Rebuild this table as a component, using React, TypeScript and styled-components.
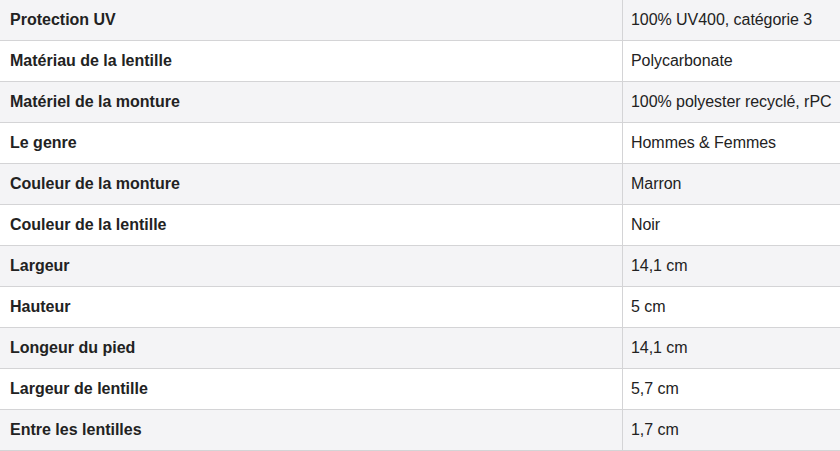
import React from 'react';
import styled, { createGlobalStyle } from 'styled-components';

const GlobalStyle = createGlobalStyle`
  html, body {
    margin: 0;
    padding: 0;
    background: #ffffff;
  }
  body {
    font-family: "Liberation Sans", Arial, Helvetica, sans-serif;
    color: #222222;
  }
`;

const specs: [string, string][] = [
  ['Protection UV', '100% UV400, catégorie 3'],
  ['Matériau de la lentille', 'Polycarbonate'],
  ['Matériel de la monture', '100% polyester recyclé, rPC'],
  ['Le genre', 'Hommes & Femmes'],
  ['Couleur de la monture', 'Marron'],
  ['Couleur de la lentille', 'Noir'],
  ['Largeur', '14,1 cm'],
  ['Hauteur', '5 cm'],
  ['Longeur du pied', '14,1 cm'],
  ['Largeur de lentille', '5,7 cm'],
  ['Entre les lentilles', '1,7 cm'],
];

const Table = styled.div`
  width: 840px;
  display: flex;
  flex-direction: column;
`;

const Row = styled.div<{ $striped: boolean }>`
  display: grid;
  grid-template-columns: 623px 1fr;
  height: 41px;
  box-sizing: border-box;
  border-bottom: 1px solid #d4d4d6;
  background: ${(p) => (p.$striped ? '#f4f4f6' : '#ffffff')};
`;

const Label = styled.div`
  display: flex;
  align-items: center;
  padding: 0 0 0 10px;
  font-size: 16px;
  font-weight: 700;
  color: #222222;
  border-right: 1px solid #d4d4d6;
`;

const Value = styled.div`
  display: flex;
  align-items: center;
  padding: 0 0 0 8px;
  font-size: 16px;
  letter-spacing: -0.05px;
  color: #222222;
`;

export default function App() {
  return (
    <>
      <GlobalStyle />
      <Table>
        {specs.map(([label, value], i) => (
          <Row key={label} $striped={i % 2 === 0}>
            <Label>{label}</Label>
            <Value>{value}</Value>
          </Row>
        ))}
      </Table>
    </>
  );
}
